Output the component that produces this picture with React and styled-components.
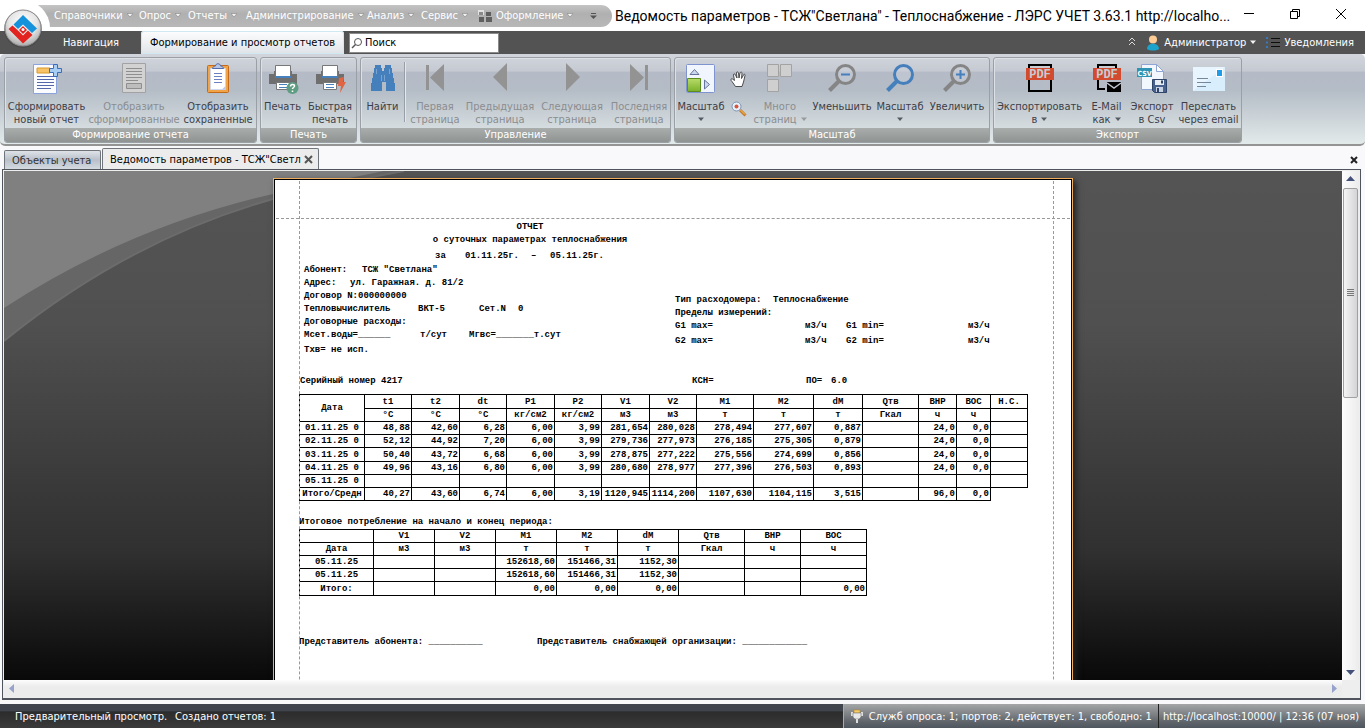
import React from "react";
import styled, { createGlobalStyle } from "styled-components";

const GlobalStyle = createGlobalStyle`
  * {
    box-sizing: border-box;
  }
  body {
    margin: 0;
    background: #f9f9fc;
    font-family: "DejaVu Sans Condensed", "Noto Sans", sans-serif;
    font-size: 11px;
    line-height: 13px;
    color: #000;
  }
  button {
    font: inherit;
    color: inherit;
    background: none;
    border: 0;
    padding: 0;
    white-space: nowrap;
  }
`;

/* ---------- data ---------- */

const menu = [
  { label: "Справочники", width: 85 },
  { label: "Опрос", width: 49 },
  { label: "Отчеты", width: 58 },
  { label: "Администрирование", width: 121 },
  { label: "Анализ", width: 54 },
  { label: "Сервис", width: 57 },
];

const mainColumns = [65, 47, 48, 47, 48, 47, 48, 47, 57, 60, 49, 56, 38, 34, 37];
const mainHead = ["t1", "t2", "dt", "P1", "P2", "V1", "V2", "M1", "M2", "dM", "Qтв", "ВНР", "ВОС", "Н.С."];
const mainUnits = ["°C", "°C", "°C", "кг/см2", "кг/см2", "м3", "м3", "т", "т", "т", "Гкал", "ч", "ч", ""];
const mainRows = [
  ["01.11.25 0", "48,88", "42,60", "6,28", "6,00", "3,99", "281,654", "280,028", "278,494", "277,607", "0,887", "", "24,0", "0,0", ""],
  ["02.11.25 0", "52,12", "44,92", "7,20", "6,00", "3,99", "279,736", "277,973", "276,185", "275,305", "0,879", "", "24,0", "0,0", ""],
  ["03.11.25 0", "50,40", "43,72", "6,68", "6,00", "3,99", "278,875", "277,222", "275,556", "274,699", "0,856", "", "24,0", "0,0", ""],
  ["04.11.25 0", "49,96", "43,16", "6,80", "6,00", "3,99", "280,680", "278,977", "277,396", "276,503", "0,893", "", "24,0", "0,0", ""],
  ["05.11.25 0", "", "", "", "", "", "", "", "", "", "", "", "", "", ""],
  ["Итого/Средн", "40,27", "43,60", "6,74", "6,00", "3,19", "1120,945", "1114,200", "1107,630", "1104,115", "3,515", "", "96,0", "0,0"],
];

const totalColumns = [74, 61, 61, 61, 61, 61, 66, 56, 66];
const totalHead = ["", "V1", "V2", "M1", "M2", "dM", "Qтв", "ВНР", "ВОС"];
const totalUnits = ["Дата", "м3", "м3", "т", "т", "т", "Гкал", "ч", "ч"];
const totalRows = [
  ["05.11.25", "", "", "152618,60", "151466,31", "1152,30", "", "", ""],
  ["05.11.25", "", "", "152618,60", "151466,31", "1152,30", "", "", ""],
  ["Итого:", "", "", "0,00", "0,00", "0,00", "", "", "0,00"],
];

/* ---------- icons ---------- */

const Svg = ({ w = 32, h = 32, children }) => (
  <svg width={w} height={h} viewBox={`0 0 ${w} ${h}`} aria-hidden="true">
    {children}
  </svg>
);

const Arrow = ({ fill = "#f4f4f4", edge = "none" }) => (
  <Svg w={6} h={5}>
    <path d="M0 .5h6L3 4z" fill={fill} stroke={edge} strokeWidth=".5" />
  </Svg>
);

const Logo = () => (
  <Svg w={40} h={40}>
    <defs>
      <radialGradient id="orb" cx="50%" cy="35%" r="65%">
        <stop offset="0" stopColor="#fff" />
        <stop offset=".6" stopColor="#e4e4e4" />
        <stop offset="1" stopColor="#aaa" />
      </radialGradient>
    </defs>
    <circle cx="20" cy="21" r="19" fill="#444" opacity=".6" />
    <circle cx="20" cy="20" r="18" fill="url(#orb)" stroke="#8a8a8a" />
    <path d="M20 7 34 20.500l-5 4.500-9-8.500-5 4.500-4.500-4.500z" fill="#1493dc" />
    <path d="M9.500 17.500 14.500 22 20 27.500l5-5 4.500 4.500L20 35.500 5.500 21z" fill="#e2231f" />
    <path d="m20 18 4 4-4 4-4-4z" fill="#e2231f" />
    <circle cx="20" cy="21.500" r="1.500" fill="#fff" />
  </Svg>
);

const NewReportIcon = () => (
  <Svg>
    <path d="M2.500 2.500h23v29h-23z" fill="#fbfcff" stroke="#8ba3dc" />
    <path d="M6 6h13v5H6z" fill="#f8c364" stroke="#d99a2b" />
    <path d="M6 14.500h17M6 17.500h17M6 20.500h17M6 23.500h17M6 26.500h14" stroke="#5467a8" />
    <path d="M22.500 2.500h4v4h4v4h-4v4h-4v-4h-4v-4h4z" fill="#a9cdf3" stroke="#3c6db5" />
  </Svg>
);

const ShowReportIcon = () => (
  <Svg>
    <path d="M4.500 1.500h23v29h-23z" fill="#d2d2d2" stroke="#a2a2a2" />
    <path d="M8 6.500h16M8 9.500h16M8 12.500h16M8 15.500h16M8 18.500h12" stroke="#8e8e8e" />
    <path d="M8.500 21.500h15v5h-15z" fill="#bdbdbd" stroke="#8e8e8e" />
  </Svg>
);

const ClipboardIcon = () => (
  <Svg>
    <rect x="5.500" y="3.500" width="21" height="27" rx="1" fill="#f0a347" stroke="#c26a1a" />
    <path d="M8.500 6.500h15v21h-15z" fill="#fff" stroke="#cfd8ee" />
    <path d="M20 27.500 23.500 24v3.500z" fill="#b9c6e4" />
    <path d="M10.500 6.500c0-2 2-2 3-2.500 0-3 5-3 5 0 1 .5 3 .5 3 2.500z" fill="#b8c6e6" stroke="#546aa8" />
    <path d="M12 11.500h8M12 14.500h8M12 17.500h8M12 20.500h8" stroke="#6a80c0" />
  </Svg>
);

const PrinterBase = () => (
  <>
    <path d="M2 14h28v8H2z" fill="#6f6f6f" />
    <path d="M2 12h5v3H2zM25 12h5v3h-5zM7 9h18v5H7z" fill="#6f6f6f" />
    <path d="M8.500 3.500h15v11h-15z" fill="#fff" stroke="#777" />
    <path d="M8 14h16v2H8z" fill="#4680bd" />
    <path d="M9.500 20.500h13v7h-13z" fill="#fff" stroke="#777" />
    <path d="M12 22.500h8M12 25.500h8" stroke="#4680bd" />
  </>
);

const PrintIcon = () => (
  <Svg>
    <PrinterBase />
    <circle cx="25.500" cy="26" r="6" fill="#5f9d82" />
    <path d="M23.500 24.500c0-3 4-2.500 4-.5 0 1.500-2 1.500-2 3M25.500 28.500v1.500" fill="none" stroke="#fff" strokeWidth="1.500" />
  </Svg>
);

const QuickPrintIcon = () => (
  <Svg>
    <PrinterBase />
    <path d="m25 16 5-1-1 5h3l-6 11 1-7h-3z" fill="#e06544" />
  </Svg>
);

const BinocularsIcon = () => (
  <Svg>
    <path d="M8 3h6v3h1v3h2V6h1V3h6v3h1v5h1v5h1v5h1v8h-9v-9h-4v9H4v-8h1v-5h1v-5h1V6h1z" fill="#457fbc" />
    <path d="M14.500 13v6M17.500 13v6M9.500 7v5M22.500 7v5" stroke="#8fb4db" strokeWidth=".7" />
  </Svg>
);

const FirstIcon = () => (
  <Svg>
    <path d="M7 3h3v25H7zM25 2v27L11 15.500z" fill="#939393" />
  </Svg>
);
const PrevIcon = () => (
  <Svg>
    <path d="M23 1v28L9 15z" fill="#939393" />
  </Svg>
);
const NextIcon = () => (
  <Svg>
    <path d="M10 1v28l14-14z" fill="#939393" />
  </Svg>
);
const LastIcon = () => (
  <Svg>
    <path d="M22 3h3v25h-3zM7 2v27l14-13.500z" fill="#939393" />
  </Svg>
);

const FitIcon = () => (
  <Svg>
    <defs>
      <linearGradient id="leaf" x2="0" y2="1">
        <stop offset="0" stopColor="#b8dc6a" />
        <stop offset="1" stopColor="#7bb02a" />
      </linearGradient>
    </defs>
    <rect x="1.500" y="2.500" width="28" height="28" rx="1" fill="#f1f5fd" stroke="#7f93cf" />
    <path d="M2.500 16.500h13v13h-13z" fill="url(#leaf)" stroke="#5c8c1d" />
    <path d="M5 12.500h9L9.500 7.500zM19.500 18v9l5-4.500z" fill="#ccd6ec" stroke="#66749c" />
  </Svg>
);

const PagesIcon = () => (
  <Svg>
    <g fill="#cfcfcf" stroke="#a3a3a3">
      <path d="M3.500 2.500h11v12h-11zM16.500 2.500h11v12h-11zM3.500 17.500h11v12h-11z" />
    </g>
  </Svg>
);

const LensIcon = ({ rim = "#858585", sign }) => (
  <Svg>
    <circle cx="19.500" cy="12.500" r="9" fill="#c9d0da" fillOpacity=".5" stroke={rim} strokeWidth="3" />
    <path d="m13 19-9.500 9.500" stroke={rim} strokeWidth="4" />
    {sign && <path d={sign} stroke="#457fbc" strokeWidth="2" />}
  </Svg>
);

const HandIcon = () => (
  <Svg w={18} h={18}>
    <path
      d="M5.500 16.500 2 11.500c-1.500-1.500-1.500-3 .5-2.500l2 1.500L3.500 5c0-1.500 1.500-1.500 2 0L7 8l-.5-5c0-1.500 1.500-1.500 2 0L9 8l1-5c.5-1.500 2-1 2 0l-.5 5.500L13.500 5c.5-1.500 2-.5 1.500.5L13.500 12 12 16.500z"
      fill="#fff"
      stroke="#3c3c3c"
      strokeWidth=".9"
    />
  </Svg>
);

const ZoomToolIcon = () => (
  <Svg w={18} h={18}>
    <path d="m10 10 5.500 5.500" stroke="#c87a2a" strokeWidth="3" />
    <path d="m10.500 10 4.500 4.500" stroke="#fbc65c" />
    <circle cx="6.500" cy="6.500" r="4.500" fill="#e6f2fc" stroke="#7c94ad" />
    <circle cx="6.500" cy="6.500" r="2" fill="#d9543c" />
  </Svg>
);

const PdfBadge = () => (
  <>
    <path d="M2 6h28v12H2z" fill="#d24b2f" />
    <text x="16" y="16" textAnchor="middle" fontFamily="Liberation Mono, monospace" fontWeight="bold" fontSize="12" fill="#c6ccd4">
      PDF
    </text>
  </>
);

const PdfIcon = () => (
  <Svg>
    <path d="M5 3h22v26H5z" fill="none" stroke="#000" strokeWidth="2" />
    <PdfBadge />
  </Svg>
);

const PdfMailIcon = () => (
  <Svg>
    <path d="M7 6V3h18v4M7 17v10h7" fill="none" stroke="#000" strokeWidth="2" />
    <PdfBadge />
    <path d="M16 20h14v10H16z" fill="#000" />
    <path d="m16 21 7 5 7-5" fill="none" stroke="#bcc4cd" strokeWidth="1.500" />
  </Svg>
);

const CsvIcon = () => (
  <Svg>
    <path d="M5.500 2.500h15l7 7v18h-22z" fill="#f2f6fd" stroke="#8fa5d6" />
    <path d="M20.500 2.500v7h7z" fill="#fff" stroke="#8fa5d6" />
    <path d="M1 6h15v9H1z" fill="#2f94b3" />
    <text x="8.500" y="13.500" textAnchor="middle" fontFamily="DejaVu Sans Condensed, sans-serif" fontWeight="bold" fontSize="7" fill="#fff">
      CSV
    </text>
    <path d="M16.500 17.500h14v13h-12l-2-2z" fill="#47618f" stroke="#2f4469" />
    <path d="M19 18h9v5h-9z" fill="#e8edf5" />
    <path d="M20 25h7v5h-7z" fill="#c7d2e4" />
    <path d="M21 26h2v4h-2zM25 18.500h2v3h-2z" fill="#2f4469" />
  </Svg>
);

const MailIcon = () => (
  <Svg>
    <path d="M0 5h32v24H0z" fill="#d8eefc" />
    <path d="M0 5h32L0 29z" fill="#e8f5fe" />
    <path d="M23 7h7v8h-7z" fill="#fff" />
    <path d="M24 8h5v6h-5z" fill="#1e9be9" />
    <path d="M4 16.500h11M4 20.500h14M4 24.500h9" stroke="#74879b" />
  </Svg>
);

const SkinIcon = () => (
  <Svg w={14} h={14}>
    <path d="M0 1h6v5H0z" fill="#e2e2e2" />
    <path d="M8 3h5v4H8zM1 8h5v5H1zM8 8h6v5H8z" fill="#5f5f5f" />
    <path d="M1 3h4v3H1z" fill="#8a8a8a" />
  </Svg>
);

const OverflowIcon = () => (
  <Svg w={7} h={8}>
    <path d="M1 1.500h5" stroke="#555" />
    <path d="M0 3.500h7L3.500 7z" fill="#555" />
  </Svg>
);

const SearchIcon = () => (
  <Svg w={12} h={12}>
    <circle cx="7" cy="5" r="3.500" fill="none" stroke="#555" />
    <path d="M4.500 7.500 1 11" stroke="#555" strokeWidth="1.500" />
  </Svg>
);

const CollapseIcon = () => (
  <Svg w={8} h={9}>
    <path d="m1 4 3-3 3 3M1 8l3-3 3 3" fill="none" stroke="#ddd" />
  </Svg>
);

const UserIcon = () => (
  <Svg w={14} h={16}>
    <circle cx="7" cy="4.500" r="4" fill="#fccc94" />
    <path d="M1 14c0-7 12-7 12 0-3 2-9 2-12 0z" fill="#1ba3cb" />
  </Svg>
);

const ListIcon = () => (
  <Svg w={14} h={12}>
    <path d="M5 1.500h9M5 5.500h9M5 9.500h9" stroke="#0d0d0d" />
    <path d="M0 1h2M0 5.500h2M0 10h2" stroke="#3878bd" strokeWidth="2" />
  </Svg>
);

const PlugIcon = () => (
  <Svg w={14} h={14}>
    <path d="M4 1h6v3H4z" fill="#f5cc6a" stroke="#b58a2a" strokeWidth=".6" />
    <path d="M1 3h2v4H1zM11 3h2v4h-2z" fill="#ddd" />
    <path d="M3 4h8v4L9 10H5L3 8z" fill="#e8e8e8" stroke="#777" strokeWidth=".6" />
    <path d="M6 10h2v4H6z" fill="#ddd" />
  </Svg>
);

/* ---------- ribbon parts ---------- */

function Action({ icon, lines, width, disabled, arrow }) {
  const arrowFill = disabled ? "#9a9a9a" : "#555a63";
  return (
    <ActionButton $width={width} disabled={disabled}>
      {icon}
      <span>{lines[0]}</span>
      <ActionLine>
        {lines[1]}
        {arrow && <Arrow fill={arrowFill} />}
      </ActionLine>
    </ActionButton>
  );
}

function Group({ title, children }) {
  return (
    <GroupBox>
      <GroupBody>{children}</GroupBody>
      <GroupTitle>{title}</GroupTitle>
    </GroupBox>
  );
}

function Ribbon() {
  return (
    <RibbonBar>
      <Group title="Формирование отчета">
        <Action width={83} icon={<NewReportIcon />} lines={["Сформировать", "новый отчет"]} />
        <Action width={92} icon={<ShowReportIcon />} lines={["Отобразить", "сформированные"]} disabled />
        <Action width={76} icon={<ClipboardIcon />} lines={["Отобразить", "сохраненные"]} />
      </Group>
      <Group title="Печать">
        <Action width={43} icon={<PrintIcon />} lines={["Печать"]} />
        <Action width={52} icon={<QuickPrintIcon />} lines={["Быстрая", "печать"]} />
      </Group>
      <Group title="Управление">
        <Action width={43} icon={<BinocularsIcon />} lines={["Найти"]} />
        <Divider />
        <Action width={58} icon={<FirstIcon />} lines={["Первая", "страница"]} disabled />
        <Action width={72} icon={<PrevIcon />} lines={["Предыдущая", "страница"]} disabled />
        <Action width={72} icon={<NextIcon />} lines={["Следующая", "страница"]} disabled />
        <Action width={62} icon={<LastIcon />} lines={["Последняя", "страница"]} disabled />
      </Group>
      <Group title="Масштаб">
        <Action width={52} icon={<FitIcon />} lines={["Масштаб", ""]} arrow />
        <ToolColumn>
          <button aria-label="Рука">
            <HandIcon />
          </button>
          <button aria-label="Лупа">
            <ZoomToolIcon />
          </button>
        </ToolColumn>
        <Action width={58} icon={<PagesIcon />} lines={["Много", "страниц"]} disabled arrow />
        <Action width={66} icon={<LensIcon sign="M15 12.500h9" />} lines={["Уменьшить"]} />
        <Action width={50} icon={<LensIcon rim="#457fbc" />} lines={["Масштаб", ""]} arrow />
        <Action width={64} icon={<LensIcon sign="M15 12.500h9M19.500 8v9" />} lines={["Увеличить"]} />
      </Group>
      <Group title="Экспорт">
        <Action width={91} icon={<PdfIcon />} lines={["Экспортировать", "в"]} arrow />
        <Action width={43} icon={<PdfMailIcon />} lines={["E-Mail", "как"]} arrow />
        <Action width={48} icon={<CsvIcon />} lines={["Экспорт", "в Csv"]} />
        <Action width={65} icon={<MailIcon />} lines={["Переслать", "через email"]} />
      </Group>
    </RibbonBar>
  );
}

/* ---------- report ---------- */

const Columns = ({ widths }) => (
  <colgroup>
    {widths.map((w, i) => (
      <Col key={i} $width={w} />
    ))}
  </colgroup>
);

const BodyRow = ({ cells, tall }) => (
  <Row $tall={tall}>
    {cells.map((text, i) => (
      <Cell key={i} $first={i === 0}>
        {text}
      </Cell>
    ))}
  </Row>
);

function Report() {
  return (
    <Paper>
      <Guide $side="left" />
      <Guide $side="right" />
      <TopGuide />
      <Heading>
        <Line $center>ОТЧЕТ</Line>
        <Line $center>о суточных параметрах теплоснабжения</Line>
        <Period>
          <Field $width={30}>за</Field>
          <Field $width={66}>01.11.25г.</Field>
          <Field $width={19}>–</Field>
          <Field>05.11.25г.</Field>
        </Period>
      </Heading>
      <Details>
        <DetailsLeft>
          <Line>
            <Field $width={58}>Абонент:</Field>
            <Field>ТСЖ "Светлана"</Field>
          </Line>
          <Line>
            <Field $width={46}>Адрес:</Field>
            <Field>ул. Гаражная. д. 81/2</Field>
          </Line>
          <Line>Договор N:000000000</Line>
          <Line>
            <Field $width={114}>Тепловычислитель</Field>
            <Field $width={61}>ВКТ-5</Field>
            <Field $width={39}>Сет.N</Field>
            <Field>0</Field>
          </Line>
          <Line>Договорные расходы:</Line>
          <Line>
            <Field $width={116}>Мсет.воды=______</Field>
            <Field $width={49}>т/сут</Field>
            <Field>Мгвс=_______т.сут</Field>
          </Line>
          <Line $tall>Тхв= не исп.</Line>
        </DetailsLeft>
        <DetailsRight>
          <Line>
            <Field $width={98}>Тип расходомера:</Field>
            <Field>Теплоснабжение</Field>
          </Line>
          <Line>Пределы измерений:</Line>
          <Line>
            <Field $width={130}>G1 max=</Field>
            <Field $width={41}>м3/ч</Field>
            <Field $width={122}>G1 min=</Field>
            <Field>м3/ч</Field>
          </Line>
          <Line $tall>
            <Field $width={130}>G2 max=</Field>
            <Field $width={41}>м3/ч</Field>
            <Field $width={122}>G2 min=</Field>
            <Field>м3/ч</Field>
          </Line>
        </DetailsRight>
      </Details>
      <Serial>
        <Field $width={392}>Серийный номер 4217</Field>
        <Field $width={114}>КСН=</Field>
        <Field $width={25}>ПО=</Field>
        <Field>6.0</Field>
      </Serial>
      <DataTable $width={729}>
        <Columns widths={mainColumns} />
        <thead>
          <Row $tall>
            <HeadCell rowSpan={2}>Дата</HeadCell>
            {mainHead.map((text) => (
              <HeadCell key={text}>{text}</HeadCell>
            ))}
          </Row>
          <Row>
            {mainUnits.map((text, i) => (
              <HeadCell key={i}>{text}</HeadCell>
            ))}
          </Row>
        </thead>
        <tbody>
          {mainRows.map((cells, i) => (
            <BodyRow key={cells[0]} cells={cells} tall={i === 2} />
          ))}
        </tbody>
      </DataTable>
      <Caption>Итоговое потребление на начало и конец периода:</Caption>
      <DataTable $width={568}>
        <Columns widths={totalColumns} />
        <thead>
          {[totalHead, totalUnits].map((row, i) => (
            <Row key={i}>
              {row.map((text, j) => (
                <HeadCell key={j}>{text}</HeadCell>
              ))}
            </Row>
          ))}
        </thead>
        <tbody>
          {totalRows.map((cells, i) => (
            <BodyRow key={i} cells={cells} tall={i === 2} />
          ))}
        </tbody>
      </DataTable>
      <Signatures>
        <Field $width={238}>Представитель абонента: __________</Field>
        <Field>Представитель снабжающей организации: ____________</Field>
      </Signatures>
    </Paper>
  );
}

/* ---------- page ---------- */

function App() {
  return (
    <Window>
      <GlobalStyle />
      <TitleBar>
        <QuickMenu>
          {menu.map((item) => (
            <MenuItem key={item.label} $width={item.width}>
              {item.label}
              <Arrow edge="#777" />
            </MenuItem>
          ))}
          <MenuItem $width={112}>
            <SkinIcon />
            Оформление
            <Arrow edge="#777" />
          </MenuItem>
          <MenuItem aria-label="Ещё">
            <OverflowIcon />
          </MenuItem>
        </QuickMenu>
        <Halo />
        <Title>Ведомость параметров - ТСЖ"Светлана" - Теплоснабжение - ЛЭРС УЧЕТ 3.63.1 http://localho...</Title>
        <WindowButtons>
          <button aria-label="Свернуть">
            <Svg w={12} h={12}>
              <path d="M1 5.500h10" stroke="#000" />
            </Svg>
          </button>
          <button aria-label="Развернуть">
            <Svg w={12} h={12}>
              <path d="M1.500 3.500h7v7h-7zM3.500 3V1.500h7v7H9" fill="none" stroke="#000" />
            </Svg>
          </button>
          <button aria-label="Закрыть">
            <Svg w={12} h={12}>
              <path d="m1 1 10 10M11 1 1 11" stroke="#000" />
            </Svg>
          </button>
        </WindowButtons>
      </TitleBar>
      <LogoButton aria-label="Меню приложения">
        <Logo />
      </LogoButton>

      <TabBar>
        <Tab>Навигация</Tab>
        <Tab $active>Формирование и просмотр отчетов</Tab>
        <SearchBox>
          <SearchIcon />
          <input aria-label="Поиск" defaultValue="Поиск" />
        </SearchBox>
        <UserArea>
          <button aria-label="Свернуть ленту">
            <CollapseIcon />
          </button>
          <UserButton>
            <UserIcon />
            Администратор
            <Arrow />
          </UserButton>
          <UserButton>
            <ListIcon />
            Уведомления
          </UserButton>
        </UserArea>
      </TabBar>

      <Ribbon />

      <DocTabs>
        <DocTab $width={97}>Объекты учета</DocTab>
        <DocTab $active $width={217}>
          <span>Ведомость параметров - ТСЖ"Светл</span>
          <Svg w={9} h={9}>
            <path d="m1 1 7 7M8 1 1 8" stroke="#555" strokeWidth="2" />
          </Svg>
        </DocTab>
        <CloseTab aria-label="Закрыть вкладку">
          <Svg w={8} h={8}>
            <path d="m1 1 6 6M7 1 1 7" stroke="#222" strokeWidth="2" />
          </Svg>
        </CloseTab>
      </DocTabs>

      <Viewer>
        <Canvas>
          <Swoosh>
            <svg width="420" height="190" viewBox="0 0 420 190" aria-hidden="true">
              <path d="M0 0h400Q345 10 269 28 124 69 0 170z" fill="#666" />
              <path d="M400 0Q345 10 269 28 124 69 0 170" fill="none" stroke="#6c6c6c" strokeWidth="2" />
              <path d="M0 0h380Q340 8 269 23 124 56 0 137z" fill="#808080" />
            </svg>
          </Swoosh>
          <Report />
        </Canvas>
        <VScroll>
          <Svg w={9} h={5}>
            <path d="M0 5h9L4.500 0z" fill="#44527a" />
          </Svg>
          <Thumb>
            <Svg w={7} h={8}>
              <path d="M0 .5h7M0 2.500h7M0 4.500h7M0 6.500h7" stroke="#777" />
            </Svg>
          </Thumb>
          <Svg w={9} h={5}>
            <path d="M0 0h9L4.500 5z" fill="#44527a" />
          </Svg>
        </VScroll>
        <HScroll>
          <Svg w={5} h={9}>
            <path d="M5 0v9L0 4.500z" fill="#97a3cb" />
          </Svg>
          <Svg w={5} h={9}>
            <path d="M0 0v9l5-4.500z" fill="#97a3cb" />
          </Svg>
        </HScroll>
      </Viewer>

      <StatusBar>
        <span>Предварительный просмотр.</span>
        <span>Создано отчетов: 1</span>
        <StatusPanel>
          <StatusItem>
            <PlugIcon />
            Служб опроса: 1; портов: 2, действует: 1, свободно: 1
          </StatusItem>
          <StatusItem>http://localhost:10000/ | 12:36 (07 ноя)</StatusItem>
        </StatusPanel>
      </StatusBar>
    </Window>
  );
}

export default App;

/* ---------- styles ---------- */

const Window = styled.div`
  position: relative;
  display: flex;
  flex-direction: column;
  height: 100vh;
  overflow: hidden;
`;

const TitleBar = styled.header`
  position: relative;
  display: flex;
  flex: none;
  align-items: center;
  height: 31px;
  padding-left: 22px;
  background: #fff;
  overflow: hidden;
`;

const QuickMenu = styled.nav`
  display: flex;
  flex: none;
  align-items: center;
  height: 22px;
  width: 590px;
  padding-left: 32px;
  border-radius: 0 11px 11px 0;
  background: linear-gradient(#c4c4c4, #b0b0b0 40%, #b8b8b8);
`;

const MenuItem = styled.button`
  display: flex;
  flex: none;
  align-items: center;
  gap: 4px;
  width: ${(p) => (p.$width ? `${p.$width}px` : "auto")};
  color: #fff;
`;

const Halo = styled.span`
  position: absolute;
  left: -6px;
  top: 0;
  width: 56px;
  height: 56px;
  border-radius: 50%;
  background: #fff;
`;

const LogoButton = styled.button`
  position: absolute;
  left: 3px;
  top: 8px;
  height: 40px;
`;

const Title = styled.h1`
  flex: 1;
  min-width: 0;
  margin: 0 0 0 3px;
  font: 400 14px/22px Roboto, "Open Sans", sans-serif;
  white-space: nowrap;
`;

const WindowButtons = styled.div`
  display: flex;
  flex: none;
  gap: 34px;
  padding-right: 18px;
`;

const TabBar = styled.div`
  display: flex;
  flex: none;
  align-items: flex-end;
  height: 23px;
  padding: 0 11px 0 41px;
  background: #535353;
  color: #fff;
`;

const Tab = styled.button`
  height: 23px;
  width: ${(p) => (p.$active ? 203 : 100)}px;
  color: ${(p) => (p.$active ? "#000" : "#fff")};
  background: ${(p) => (p.$active ? "linear-gradient(#fdfdfe, #dfe3e8)" : "none")};
  border-radius: 3px 3px 0 0;
  box-shadow: ${(p) => (p.$active ? "inset 0 0 0 1px #cfe9f2" : "none")};
`;

const SearchBox = styled.label`
  display: flex;
  align-items: center;
  align-self: center;
  gap: 2px;
  width: 150px;
  height: 20px;
  margin-left: 5px;
  padding: 0 1px;
  background: #fff;
  border: 1px solid #8a8a8a;
  input {
    width: 120px;
    padding: 0;
    border: 0;
    outline: 0;
    font: inherit;
    color: #000;
  }
`;

const UserArea = styled.div`
  display: flex;
  align-items: center;
  gap: 10px;
  height: 23px;
  margin-left: auto;
`;

const UserButton = styled.button`
  display: flex;
  align-items: center;
  gap: 4px;
`;

const RibbonBar = styled.div`
  display: flex;
  flex: none;
  gap: 3px;
  height: 92px;
  padding: 3px 4px;
  border-radius: 5px;
  border-bottom: 2px solid #949494;
  background: linear-gradient(#d2d5dc, #c5cad2 19%, #b5bbc6 20%, #b4bcc6 40%, #e3eaea);
`;

const GroupBox = styled.section`
  display: flex;
  flex: none;
  flex-direction: column;
  height: 86px;
  border: 1px solid #9aa0a6;
  border-radius: 3px;
  box-shadow: inset 1px 1px 0 #dde1e5;
  overflow: hidden;
`;

const GroupBody = styled.div`
  display: flex;
  flex: 1;
`;

const GroupTitle = styled.div`
  height: 14px;
  line-height: 14px;
  text-align: center;
  color: #fff;
  background: linear-gradient(#a9adac, #8f9391);
`;

const ActionButton = styled.button`
  display: flex;
  flex-direction: column;
  align-items: center;
  width: ${(p) => p.$width}px;
  padding-top: 4px;
  color: ${(p) => (p.disabled ? "#8b8d90" : "#3d3e48")};
  svg:first-child {
    flex: none;
    margin-bottom: 6px;
  }
`;

const ActionLine = styled.span`
  display: flex;
  align-items: center;
  gap: 4px;
  height: 13px;
  && svg {
    margin: 0;
  }
`;

const Divider = styled.span`
  width: 2px;
  height: 60px;
  margin-top: 4px;
  border-left: 1px solid #989ea6;
  border-right: 1px solid #e4e8ec;
`;

const ToolColumn = styled.div`
  display: flex;
  flex-direction: column;
  align-items: center;
  gap: 12px;
  width: 24px;
  padding-top: 12px;
  button {
    height: 18px;
  }
`;

const DocTabs = styled.div`
  display: flex;
  flex: none;
  align-items: flex-end;
  gap: 1px;
  height: 23px;
  padding: 0 7px 0 4px;
`;

const DocTab = styled.button`
  display: flex;
  align-items: center;
  justify-content: space-between;
  width: ${(p) => p.$width}px;
  height: ${(p) => (p.$active ? 21 : 19)}px;
  padding: 0 5px 0 7px;
  color: ${(p) => (p.$active ? "#000" : "#333")};
  border: 1px solid #6f757a;
  border-bottom: 0;
  border-radius: 2px 2px 0 0;
  background: ${(p) => (p.$active ? "#ececec" : "linear-gradient(#dfe3e8, #b9c0ca 50%, #d4dae0)")};
`;

const CloseTab = styled.button`
  align-self: center;
  height: 8px;
  margin-left: auto;
`;

const Viewer = styled.main`
  display: grid;
  grid-template-columns: 1fr 17px;
  grid-template-rows: 1fr 17px;
  flex: 1;
  min-height: 0;
  margin: 0 4px 0 2px;
  border: 1px solid #50555d;
  border-width: 1px 1px 2px;
  background: #eee;
  padding: 1px;
`;

const Canvas = styled.div`
  position: relative;
  display: flex;
  justify-content: center;
  align-items: flex-start;
  overflow: hidden;
  padding-top: 7px;
  background: linear-gradient(#545454, #505050 30%, #303030 75%, #090909);
`;

const Swoosh = styled.div`
  position: absolute;
  left: 0;
  top: 0;
`;

const VScroll = styled.div`
  display: flex;
  flex-direction: column;
  align-items: center;
  justify-content: space-between;
  padding: 5px 0;
  background: linear-gradient(90deg, #fdfdfd, #ececec);
`;

const Thumb = styled.div`
  display: flex;
  align-items: center;
  justify-content: center;
  width: 15px;
  height: 42%;
  margin: 7px 0 auto;
  border: 1px solid #a0a0a0;
  border-radius: 2px;
  background: linear-gradient(90deg, #f4f4f4, #d4d4d8);
`;

const HScroll = styled.div`
  display: flex;
  align-items: center;
  justify-content: space-between;
  padding: 0 5px;
  background: linear-gradient(#fdfdfd, #ececec 40%);
`;

const Paper = styled.article`
  position: relative;
  flex: none;
  width: 800px;
  height: 1130px;
  padding: 40px 18px 0 25px;
  background: #fff;
  border: 1px solid #f0b060;
  box-shadow: inset 0 0 0 1px #000, 3px 3px 6px #222;
  font: 700 9px/13px "Liberation Mono", monospace;
  white-space: pre;
`;

const Guide = styled.span`
  position: absolute;
  top: 2px;
  bottom: 2px;
  ${(p) => p.$side}: ${(p) => (p.$side === "left" ? 25 : 18)}px;
  border-left: 1px dashed #999;
`;

const TopGuide = styled.span`
  position: absolute;
  top: 39px;
  left: 2px;
  right: 2px;
  border-top: 1px dashed #999;
`;

const Line = styled.div`
  display: flex;
  align-items: flex-end;
  height: ${(p) => (p.$tall ? 15 : 13)}px;
  justify-content: ${(p) => (p.$center ? "center" : "flex-start")};
`;

const Field = styled.span`
  flex: none;
  width: ${(p) => (p.$width ? `${p.$width}px` : "auto")};
`;

const Heading = styled.div`
  width: 462px;
  padding: 2px 0 1px;
`;

const Period = styled(Line)`
  margin: 3px 0 0 136px;
`;

const Details = styled.div`
  display: flex;
  margin-left: 5px;
`;

const DetailsLeft = styled.div`
  width: 371px;
`;

const DetailsRight = styled.div`
  padding-top: 30px;
`;

const Serial = styled(Line)`
  margin: 18px 0 6px 1px;
`;

const DataTable = styled.table`
  width: ${(p) => p.$width}px;
  table-layout: fixed;
  border-collapse: collapse;
  font: inherit;
  line-height: 12px;
`;

const Col = styled.col`
  width: ${(p) => p.$width}px;
`;

const Row = styled.tr`
  height: ${(p) => (p.$tall ? 14 : 13)}px;
`;

const Cell = styled.td`
  padding: 0 1px;
  border: 1px solid #000;
  text-align: ${(p) => (p.$first ? "center" : "right")};
`;

const HeadCell = styled.th`
  padding: 0;
  border: 1px solid #000;
  font-weight: 700;
`;

const Caption = styled.div`
  margin: 15px 0 0;
`;

const Signatures = styled(Line)`
  margin-top: 40px;
`;

const StatusBar = styled.footer`
  display: flex;
  flex: none;
  align-items: center;
  gap: 8px;
  height: 24px;
  margin-top: 4px;
  padding-left: 15px;
  color: #fff;
  white-space: nowrap;
  background: linear-gradient(#40444c, #40444c 30%, #2c2c2c 32%, #3a3a3a);
`;

const StatusPanel = styled.div`
  display: flex;
  height: 24px;
  margin-left: auto;
  background: linear-gradient(#a4a6a7, #85888b 35%, #5f646a 75%, #50565e);
  border-left: 1px solid #aaa;
`;

const StatusItem = styled.span`
  display: flex;
  align-items: center;
  gap: 5px;
  padding: 0 6px;
  & + & {
    border-left: 1px solid #222;
    padding-left: 4px;
  }
`;
